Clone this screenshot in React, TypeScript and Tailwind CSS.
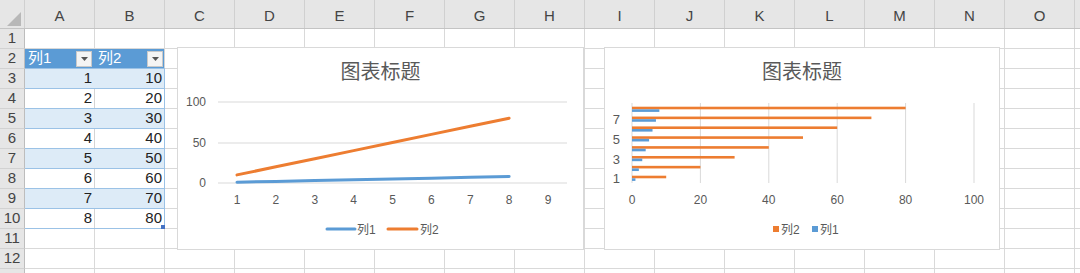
import React from 'react';

const COLS = ['A', 'B', 'C', 'D', 'E', 'F', 'G', 'H', 'I', 'J', 'K', 'L', 'M', 'N', 'O'];
const BLUE = '#5b9bd5';
const ORANGE = '#ed7d31';
const TXT = '#595959';
const GRID = '#d9d9d9';

function DropBtn() {
  return (
    <div className="w-[16px] h-[16px] bg-[#f4f4f4] border border-[#c9c9c9] flex items-center justify-center">
      <svg width="7" height="4" viewBox="0 0 7 4">
        <polygon points="0,0 7,0 3.5,4" fill="#555" />
      </svg>
    </div>
  );
}

function TableCell({ row, col }: { row: number; col: number }) {
  if (row === 2) {
    return (
      <div
        className={
          col === 0
            ? 'w-[70px] h-full shrink-0 bg-[#5b9bd5] border-r border-[#5b9bd5] flex items-center justify-between pl-[3px] pr-[2px] text-white'
            : 'w-[70px] h-full shrink-0 bg-[#5b9bd5] border-r border-[#d4d4d4] flex items-center justify-between pl-[3px] pr-[1px] text-white'
        }
      >
        <span>{col === 0 ? '列1' : '列2'}</span>
        <DropBtn />
      </div>
    );
  }
  const n = row - 2;
  const banded = row % 2 === 1;
  const val = col === 0 ? n : n * 10;
  let cls = 'w-[70px] h-full shrink-0 flex items-center justify-end pr-[2px] text-[#222]';
  if (banded) {
    cls += col === 0 ? ' bg-[#ddebf7] border-r border-[#ddebf7]' : ' bg-[#ddebf7] border-r border-[#9bc2e6]';
  } else {
    cls += col === 0 ? ' bg-white border-r border-[#d4d4d4]' : ' bg-white border-r border-[#9bc2e6]';
  }
  return (
    <div className={cls + ' relative'}>
      <span>{val}</span>
      {row === 10 && col === 1 && (
        <div className="absolute right-[-1px] bottom-[-1px] w-[4px] h-[4px] bg-[#4472c4]" />
      )}
    </div>
  );
}

function Row({ row }: { row: number }) {
  const inTable = row >= 2 && row <= 10;
  const rowBorder = row >= 2 && row <= 10 ? 'border-[#9bc2e6]' : 'border-[#d9d9d9]';
  return (
    <div className="flex h-[20px] shrink-0">
      <div className="w-[25px] h-full shrink-0 bg-[#e6e6e6] border-r border-b border-r-[#bdbdbd] border-b-[#d2d2d2] flex items-center justify-center text-[#444]">
        {row <= 12 ? row : ''}
      </div>
      {COLS.map((c, i) =>
        inTable && i < 2 ? (
          <div key={c} className={'h-full shrink-0 border-b ' + rowBorder}>
            <TableCell row={row} col={i} />
          </div>
        ) : (
          <div key={c} className="w-[70px] h-full shrink-0 border-r border-b border-[#d9d9d9]" />
        )
      )}
      <div className="flex-1 h-full border-b border-[#d9d9d9]" />
    </div>
  );
}

function LineChart() {
  const x = (i: number) => 59 + (i - 1) * 38.875;
  const y = (v: number) => 95 - v * 0.81;
  const s1 = [1, 2, 3, 4, 5, 6, 7, 8].map((i) => `${x(i)},${y(i)}`).join(' ');
  const s2 = [1, 2, 3, 4, 5, 6, 7, 8].map((i) => `${x(i)},${y(i * 10)}`).join(' ');
  return (
    <div className="absolute left-[177px] top-[47px] w-[407px] h-[203px] bg-white border border-[#d9d9d9] flex flex-col">
      <div className="h-[40px] shrink-0 pt-[10px] text-center text-[20px] leading-[28px] text-[#595959]">图表标题</div>
      <svg width="405" height="161" className="block">
        {[14, 55, 95].map((gy) => (
          <line key={gy} x1="40" x2="389" y1={gy} y2={gy} stroke={GRID} strokeWidth="1" />
        ))}
        {[
          ['100', 14],
          ['50', 55],
          ['0', 95],
        ].map(([t, gy]) => (
          <text key={t as string} x="28" y={(gy as number) + 4} textAnchor="end" fontSize="12" fill={TXT}>
            {t}
          </text>
        ))}
        {[1, 2, 3, 4, 5, 6, 7, 8, 9].map((i) => (
          <text key={i} x={x(i)} y="116" textAnchor="middle" fontSize="12" fill={TXT}>
            {i}
          </text>
        ))}
        <polyline points={s1} fill="none" stroke={BLUE} strokeWidth="3" strokeLinecap="round" />
        <polyline points={s2} fill="none" stroke={ORANGE} strokeWidth="3" strokeLinecap="round" />
        <line x1="149" x2="177" y1="141" y2="141" stroke={BLUE} strokeWidth="3" strokeLinecap="round" />
        <text x="179" y="145.5" fontSize="12" fill={TXT}>列1</text>
        <line x1="210" x2="239" y1="141" y2="141" stroke={ORANGE} strokeWidth="3" strokeLinecap="round" />
        <text x="242" y="145.5" fontSize="12" fill={TXT}>列2</text>
      </svg>
    </div>
  );
}

function BarChart() {
  const x0 = 27;
  const k = 3.42;
  return (
    <div className="absolute left-[604px] top-[47px] w-[396px] h-[203px] bg-white border border-[#d9d9d9] flex flex-col">
      <div className="h-[40px] shrink-0 pt-[10px] text-center text-[20px] leading-[28px] text-[#595959]">图表标题</div>
      <svg width="394" height="161" className="block">
        {[0, 20, 40, 60, 80, 100].map((v) => (
          <line key={v} x1={x0 + v * k} x2={x0 + v * k} y1="15" y2="95" stroke={GRID} strokeWidth="1" />
        ))}
        {[1, 2, 3, 4, 5, 6, 7, 8].map((i) => {
          const cy = 89 - (i - 1) * 9.857;
          return (
            <g key={i}>
              <rect x={x0} y={cy - 1.3} width={i * 10 * k} height="2.6" fill={ORANGE} />
              <rect x={x0} y={cy + 1.3} width={i * k} height="2.6" fill={BLUE} />
            </g>
          );
        })}
        {[
          ['7', 31],
          ['5', 51],
          ['3', 71],
          ['1', 90],
        ].map(([t, cy]) => (
          <text key={t as string} x="15" y={(cy as number) + 4.5} textAnchor="end" fontSize="13" fill={TXT}>
            {t}
          </text>
        ))}
        {[0, 20, 40, 60, 80, 100].map((v) => (
          <text key={v} x={x0 + v * k} y="116" textAnchor="middle" fontSize="12" fill={TXT}>
            {v}
          </text>
        ))}
        <rect x="168" y="138" width="6" height="6" fill={ORANGE} />
        <text x="176" y="145.5" fontSize="12" fill={TXT}>列2</text>
        <rect x="207" y="138" width="6" height="6" fill={BLUE} />
        <text x="215" y="145.5" fontSize="12" fill={TXT}>列1</text>
      </svg>
    </div>
  );
}

export default function App() {
  const rows = Array.from({ length: 13 }, (_, i) => i + 1);
  return (
    <div className="relative w-[1080px] h-[273px] overflow-hidden bg-white text-[15px] font-['Liberation_Sans','Noto_Sans_CJK_SC',sans-serif]">
      <div className="flex h-[29px] bg-[#e6e6e6] border-b border-[#c4c4c4]">
        <div className="w-[25px] h-full shrink-0 border-r border-[#d0d0d0] flex items-end justify-end pr-[3px] pb-[2px]">
          <svg width="14" height="14" viewBox="0 0 14 14">
            <polygon points="14,0 14,14 0,14" fill="#b8b8b8" />
          </svg>
        </div>
        {COLS.map((c) => (
          <div
            key={c}
            className="w-[70px] h-full shrink-0 border-r border-[#d0d0d0] flex items-center justify-center pt-[4px] text-[#444]"
          >
            {c}
          </div>
        ))}
        <div className="flex-1" />
      </div>
      {rows.map((r) => (
        <Row key={r} row={r} />
      ))}
      <LineChart />
      <BarChart />
    </div>
  );
}
